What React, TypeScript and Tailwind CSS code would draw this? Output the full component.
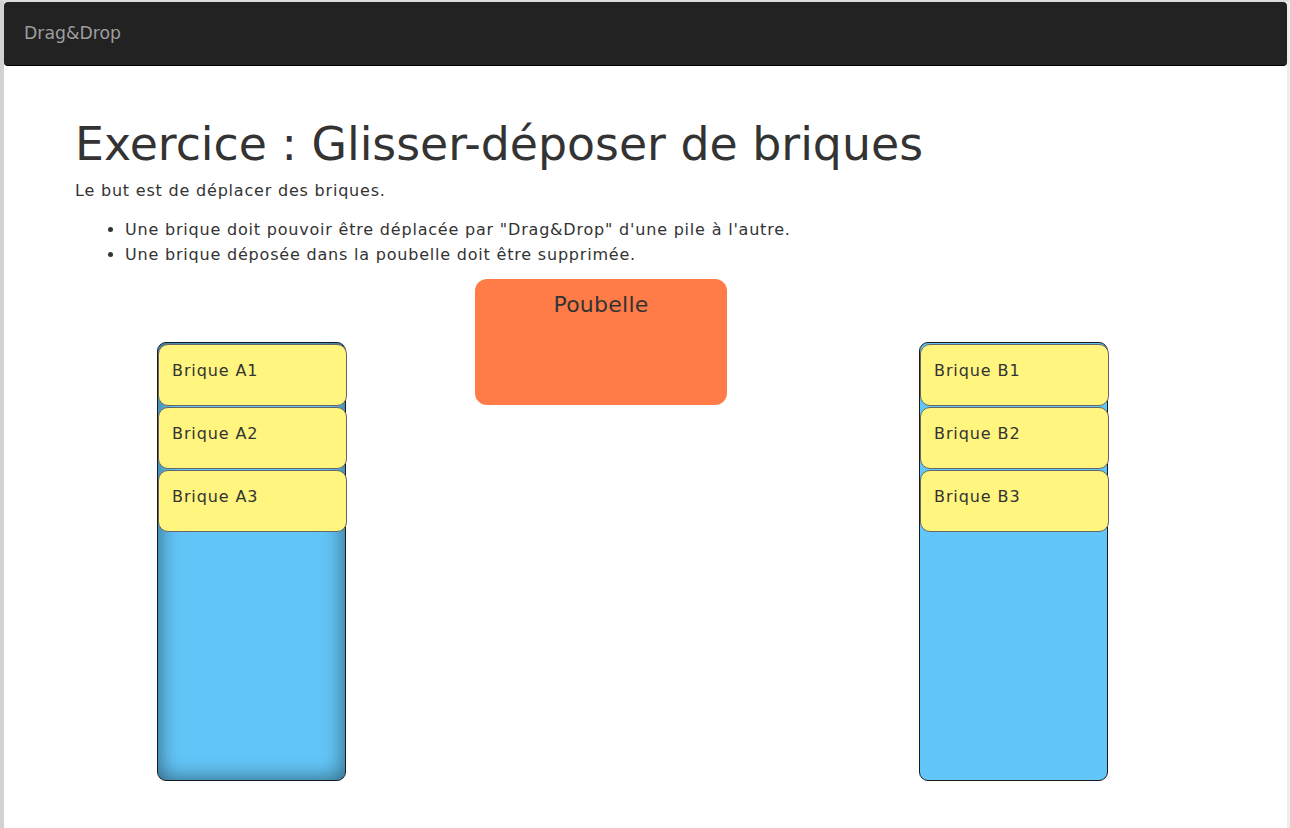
import React from "react"

type Brick = { id: string; label: string }

const pileA: Brick[] = [
	{ id: "a1", label: "Brique A1" },
	{ id: "a2", label: "Brique A2" },
	{ id: "a3", label: "Brique A3" },
]

const pileB: Brick[] = [
	{ id: "b1", label: "Brique B1" },
	{ id: "b2", label: "Brique B2" },
	{ id: "b3", label: "Brique B3" },
]

function Pile({ bricks, hover }: { bricks: Brick[]; hover?: boolean }) {
	return (
		<div
			className={
				"mt-[63px] h-[439px] w-[189px] rounded-[9px] border border-[#1a1a1a] bg-[#63c6f8] " +
				(hover ? "shadow-[inset_0_0_22px_rgba(0,0,0,0.55)]" : "")
			}
		>
			{bricks.map((b) => (
				<div
					key={b.id}
					className="mt-[1px] h-[62px] w-[189px] rounded-[10px] border border-[#666] bg-[#fff57f] px-[13px] pt-[15px] text-[16px] leading-[22px] tracking-[0.9px]"
				>
					{b.label}
				</div>
			))}
		</div>
	)
}

export default function App() {
	return (
		<div
			className="min-h-[828px] border-t-2 border-l-4 border-r-[3px] border-t-[#dcdcdc] border-l-[#d2d2d2] border-r-[#ededed] bg-white text-[#333]"
			style={{ fontFamily: '"DejaVu Sans", Verdana, sans-serif' }}
		>
			<nav className="flex h-[64px] items-center rounded-[4px] border-b border-black bg-[#222] px-5">
				<span className="text-[17.3px] text-[#9d9d9d]">Drag&amp;Drop</span>
			</nav>

			<main className="pl-[71px] pt-[53px]">
				<h1 className="text-[45.8px] leading-[1.1]">Exercice : Glisser-déposer de briques</h1>
				<p className="mt-[11px] text-[16px] leading-[22px] tracking-[0.8px]">Le but est de déplacer des briques.</p>
				<ul className="mt-[15px] list-disc pl-[50px] text-[16px] leading-[25px] tracking-[0.8px]">
					<li>Une brique doit pouvoir être déplacée par "Drag&amp;Drop" d'une pile à l'autre.</li>
					<li>Une brique déposée dans la poubelle doit être supprimée.</li>
				</ul>

				<div className="mt-[12px] flex items-start pl-[82px]">
					<Pile bricks={pileA} hover />
					<div className="ml-[129px] h-[126px] w-[252px] rounded-[12px] bg-[#ff7b47] pt-[14px] text-center text-[22px] leading-[1.1] tracking-[0.25px]">
						Poubelle
					</div>
					<div className="ml-[192px]">
						<Pile bricks={pileB} />
					</div>
				</div>
			</main>
		</div>
	)
}
